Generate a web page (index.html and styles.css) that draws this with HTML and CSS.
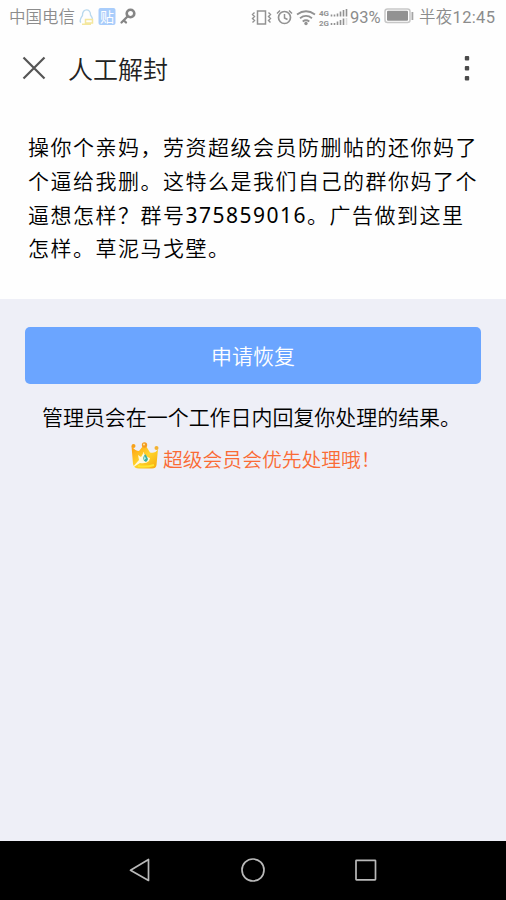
FILE: index.html
```html
<!DOCTYPE html>
<html lang="zh-CN">
<head>
<meta charset="utf-8">
<title>人工解封</title>
<link rel="stylesheet" href="styles.css">
</head>
<body>
<div class="screen">
  <div class="status">
    <span class="carrier">中国电信</span>
    <svg class="left-icons" width="64" height="24" viewBox="0 0 64 24" fill="none">
      <path d="M6 18.500c-2-1 0-5 1.500-7C7 4 16 4 15.500 11c1.500 2 2.500 4 1.500 5" stroke="#b9d9ee" stroke-width="1.300"/>
      <path d="M10.500 15.500h7v3.500h-7zM7 20.300h9" stroke="#f4e79e" stroke-width="1.500"/>
      <rect x="23.500" y="4" width="17" height="17" rx="2" fill="#a9cdfb"/>
      <text class="badge-text" x="25" y="17.500">贴</text>
      <circle cx="55.500" cy="9.500" r="3.800" stroke="#858585" stroke-width="2.600"/>
      <path d="M52.500 12.500L46.500 18.500M49 16.500l2 2" stroke="#858585" stroke-width="2.300" stroke-linecap="round"/>
    </svg>
    <svg class="right-icons" width="98" height="24" viewBox="0 0 98 24" fill="none" stroke="#929292">
      <path d="M6.500 7.500h8v13h-8z" transform="translate(0 -.5)" stroke-width="1.500"/>
      <path d="M3.500 9l-2 2 2 2-2 2 2 2-2 2M17.500 9l2 2-2 2 2 2-2 2 2 2" transform="translate(0 -.5)" stroke-width="1.400"/>
      <circle cx="33.500" cy="13.500" r="6" stroke-width="1.700"/>
      <path d="M33.500 10v4l3 1.500M26 9.500l3-3M38 6.500l3 3" stroke-width="1.500"/>
      <path d="M46 10.500q9-6.500 18 0M49 14.200q6-4.500 12 0M51.700 17.500q3.300-2.500 6.600 0" stroke-width="1.800"/>
      <circle cx="55" cy="19.500" r="1.700" fill="#929292" stroke="none"/>
      <text class="net" x="68" y="12" textLength="10" lengthAdjust="spacingAndGlyphs">4G</text>
      <text class="net" x="68" y="21.500" textLength="10" lengthAdjust="spacingAndGlyphs">2G</text>
      <path d="M80.500 10.500v2M83.500 10.500v2M86.500 9.500v3M89.500 7.500v5M92.500 6v6.500M95.500 5v7.500M80.500 19v2M83.500 19v2M86.500 17.500V21M89.500 16v5M92.500 14.500V21" stroke-width="1.600"/>
      <path d="M95.500 14v7" stroke="#ddd" stroke-width="1.600"/>
    </svg>
    <span class="percent">93%</span>
    <svg class="battery" width="31" height="18" viewBox="0 0 31 18">
      <rect x="1" y="2" width="25" height="13.500" rx="2.500" fill="#fff" stroke="#c7c7c7" stroke-width="1.500"/>
      <rect x="3" y="3.800" width="21" height="10" rx="1" fill="#929292"/>
      <rect x="27.500" y="5" width="1.800" height="8" fill="#a5a5a5"/>
    </svg>
    <span class="clock">半夜<b class="num">12:45</b></span>
  </div>
  <header class="header">
    <svg class="close" width="24" height="24" viewBox="0 0 24 24"><path d="M1.500 1.500l21 21M22.500 1.500l-21 21" stroke="#555" stroke-width="2.200"/></svg>
    <h1 class="title">人工解封</h1>
    <svg class="more" width="6" height="26" viewBox="0 0 6 26" fill="#4b4b4b"><rect x=".8" y="1" width="4.400" height="4.400" rx="1"/><rect x=".8" y="11" width="4.400" height="4.400" rx="1"/><rect x=".8" y="21" width="4.400" height="4.400" rx="1"/></svg>
  </header>
  <p class="message">操你个亲妈，劳资超级会员防删帖的还你妈了<br>个逼给我删。这特么是我们自己的群你妈了个<br>逼想怎样？群号<b class="num">375859016</b>。广告做到这里<br>怎样。草泥马戈壁。</p>
  <main class="panel">
    <button class="submit">申请恢复</button>
    <p class="hint">管理员会在一个工作日内回复你处理的结果。</p>
    <div class="vip">
      <svg width="30" height="28" viewBox="0 0 30 28">
        <defs><linearGradient id="gold" x1="0" y1="0" x2="1" y2="1"><stop offset="0" stop-color="#ff9d12"/><stop offset=".5" stop-color="#ffd52b"/><stop offset="1" stop-color="#f5a70c"/></linearGradient></defs>
        <path d="M1.500 4L3 22Q4 26.500 9 26.500H22Q26 26.500 26.500 23L28 7Q25 12 20 10.500L16 4H13L9 9Q5 9 1.500 4z" fill="url(#gold)"/>
        <circle cx="3.500" cy="4" r="2" fill="#f6a21b"/><circle cx="14.500" cy="3" r="2.700" fill="#f49b20"/><circle cx="14" cy="2.500" r="1" fill="#ffe9a0"/><circle cx="26.500" cy="6" r="2" fill="#f3b232"/>
        <path d="M14 10l-3 5-3-2 1 5-7 8 8-5q6 1 9-2l1-3q-4-1-7-6z" fill="#fff9dc"/>
        <path d="M15 12q5 5 1 8-5-2-1-8z" fill="#38aca0"/>
        <path d="M14.500 14l1.500 2.500-2.500 2z" fill="#b6eee2"/>
        <path d="M8 24q8 1.500 16-1" fill="none" stroke="#ffe52f" stroke-width="2"/>
      </svg>
      <span>超级会员会优先处理哦！</span>
    </div>
  </main>
  <nav class="nav">
    <svg width="22" height="26" viewBox="0 0 22 26"><path d="M19.500 2.500v21L1.500 13.300z"/></svg>
    <svg width="26" height="26" viewBox="0 0 26 26"><circle cx="13" cy="13" r="11"/></svg>
    <svg width="22" height="26" viewBox="0 0 22 26"><rect x="1" y="3.300" width="19.500" height="19.500" rx=".5"/></svg>
  </nav>
</div>
</body>
</html>
```
FILE: styles.css
```css
* { box-sizing: border-box; }
body {
  margin: 0;
  background: #eeeff7;
  color: #000;
  font-family: "Noto Sans", "Noto Sans CJK SC", sans-serif;
}
p, h1 { margin: 0; font-weight: 350; }
svg { display: block; flex: none; }
.num { font-weight: 400; }
.screen {
  width: 506px;
  height: 900px;
  display: flex;
  flex-direction: column;
  overflow: hidden;
}
.status {
  height: 34px;
  display: flex;
  align-items: center;
  padding-left: 9px;
  background: #fefefe;
  color: #8c8c8c;
  font-family: Roboto, "Noto Sans CJK SC", sans-serif;
  font-size: 16.5px;
  font-weight: 350;
  line-height: 34px;
  white-space: nowrap;
}
.status span { padding-top: 2px; }
.status svg { margin-top: -2px; }
.badge-text {
  fill: #fff;
  font-family: "Noto Sans CJK SC", sans-serif;
  font-size: 14px;
  font-weight: 400;
}
.net {
  fill: #929292;
  stroke: none;
  font-family: Roboto, sans-serif;
  font-size: 8px;
  font-weight: 700;
}
.carrier { width: 66px; }
.left-icons { margin-right: 112px; }
.percent { width: 34px; margin-left: 1px; font-size: 16.5px; font-weight: 400; }
.battery { margin-right: 4px; }
.clock { letter-spacing: .3px; }
.header {
  height: 72px;
  display: flex;
  align-items: center;
  padding: 0 36px 4px 22px;
  background: #fefefe;
}
.title {
  flex: 1;
  margin-left: 22px;
  color: #222;
  font-family: "Noto Sans CJK SC", sans-serif;
  font-size: 25px;
  line-height: 36px;
}
.message {
  height: 193px;
  padding: 25px 0 0 28px;
  background: #fefefe;
  font-size: 21px;
  letter-spacing: 1.5px;
  line-height: 33.75px;
  white-space: nowrap;
}
.panel {
  flex: 1;
  padding: 28px 25px 0;
  background: #eeeff7;
}
.submit {
  display: block;
  width: 100%;
  height: 57px;
  padding: 0 0 2px;
  border: 0;
  border-radius: 5px;
  background: #6ba5ff;
  color: #fff;
  font: 350 21px "Noto Sans CJK SC", sans-serif;
}
.hint {
  margin: 16px 0 0 17px;
  font-size: 21px;
  letter-spacing: -.05px;
  line-height: 34px;
  white-space: nowrap;
}
.vip {
  display: flex;
  align-items: center;
  margin: 8px 0 0 105px;
  color: #fa6b35;
  font-size: 19.8px;
  font-weight: 350;
  line-height: 34px;
}
.vip svg { margin: -8px 3px 0 0; }
.vip span { padding-top: 1px; }
.nav {
  height: 59px;
  display: flex;
  justify-content: center;
  align-items: center;
  gap: 89px;
  padding-bottom: 1px;
  background: #000;
}
.nav svg {
  fill: none;
  stroke: #b9b9b9;
  stroke-width: 1.7;
  stroke-linejoin: round;
}
```
